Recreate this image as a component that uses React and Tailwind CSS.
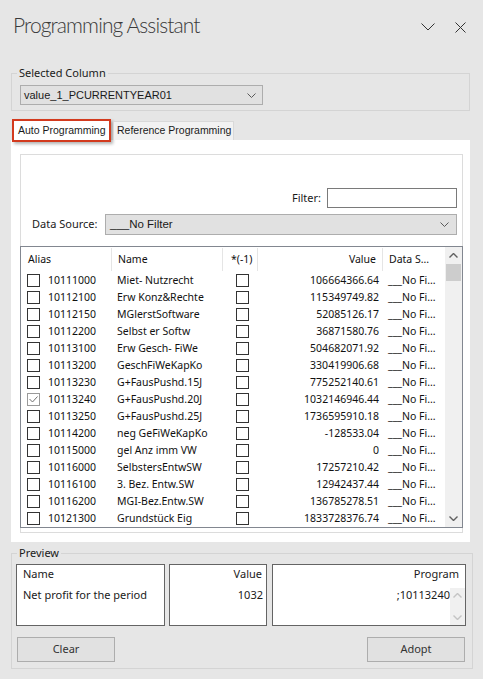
import React from "react";

const rows = [
  ["10111000", "Miet- Nutzrecht", "106664366.64"],
  ["10112100", "Erw Konz&Rechte", "115349749.82"],
  ["10112150", "MGlerstSoftware", "52085126.17"],
  ["10112200", "Selbst er Softw", "36871580.76"],
  ["10113100", "Erw Gesch- FiWe", "504682071.92"],
  ["10113200", "GeschFiWeKapKo", "330419906.68"],
  ["10113230", "G+FausPushd.15J", "775252140.61"],
  ["10113240", "G+FausPushd.20J", "1032146946.44", true],
  ["10113250", "G+FausPushd.25J", "1736595910.18"],
  ["10114200", "neg GeFiWeKapKo", "-128533.04"],
  ["10115000", "gel Anz imm VW", "0"],
  ["10116000", "SelbstersEntwSW", "17257210.42"],
  ["10116100", "3. Bez. Entw.SW", "12942437.44"],
  ["10116200", "MGI-Bez.Entw.SW", "136785278.51"],
  ["10121300", "Grundstück Eig", "1833728376.74"],
];

function Check({ checked }) {
  return (
    <span
      className={
        checked
          ? "w-[13px] h-[13px] border border-[#9a9a9a] bg-white flex items-center justify-center shrink-0"
          : "w-[13px] h-[13px] border border-[#333333] bg-white flex items-center justify-center shrink-0"
      }
    >
      {checked && (
        <svg width="11" height="11" viewBox="0 0 11 11">
          <path d="M1.5 5 L4.5 8 L9.5 2.5" fill="none" stroke="#707070" strokeWidth="1" />
        </svg>
      )}
    </span>
  );
}

function SmallChevron({ color = "#5a5a5a" }) {
  return (
    <svg width="9" height="5" viewBox="0 0 9 5">
      <path d="M0.5 0.5 L4.5 4.5 L8.5 0.5" fill="none" stroke={color} strokeWidth="1" />
    </svg>
  );
}

function Caret({ up, color }) {
  return (
    <svg width="9" height="5" viewBox="0 0 9 5">
      <path
        d={up ? "M0.5 4.5 L4.5 0.5 L8.5 4.5" : "M0.5 0.5 L4.5 4.5 L8.5 0.5"}
        fill="none"
        stroke={color}
        strokeWidth="1.4"
      />
    </svg>
  );
}

export default function App() {
  return (
    <div className="w-[483px] h-[679px] overflow-hidden bg-[#e6e6e6] text-[#1a1a1a] font-['Noto_Sans',sans-serif] text-[11px]">
      {/* title bar */}
      <div className="flex h-[52px] pl-[13px] pr-[17px]">
        <div className="pt-[14px] text-[21px] leading-[22px] font-light tracking-[-0.9px] text-[#3a3a3a] font-['Lato',sans-serif] whitespace-nowrap">
          Programming Assistant
        </div>
        <div className="ml-auto flex items-center gap-[20px] mt-[2px]">
          <svg width="14" height="8" viewBox="0 0 14 8">
            <path d="M0.5 0.5 L7 7 L13.5 0.5" fill="none" stroke="#333" strokeWidth="1" />
          </svg>
          <svg width="11" height="11" viewBox="0 0 11 11">
            <path d="M0.5 0.5 L10.5 10.5 M10.5 0.5 L0.5 10.5" fill="none" stroke="#333" strokeWidth="1" />
          </svg>
        </div>
      </div>

      {/* selected column group */}
      <fieldset className="mt-[13px] ml-[11px] w-[459px] border border-[#d4d4d4] px-[8px] pt-[4px] pb-[5px]">
        <legend className="-ml-[3px] px-[2px] text-[11px] leading-[16px] text-[#1a1a1a]">Selected Column</legend>
        <div className="w-[243px] h-[20px] bg-[#e1e1e1] border border-[#adadad] flex items-center pl-[3px] pr-[6px] font-['Liberation_Sans',sans-serif] text-[11px]">
          <span>value_1_PCURRENTYEAR01</span>
          <span className="ml-auto flex">
            <SmallChevron />
          </span>
        </div>
      </fieldset>

      {/* tab strip */}
      <div className="relative z-10 flex items-start h-[21px] mt-[8px] ml-[12px] font-['Liberation_Sans',sans-serif] text-[10.5px] whitespace-nowrap">
        <div className="w-[99px] h-[23px] border-2 border-[#d33a1e] bg-white pl-[4px] flex items-center shadow-[2px_2px_3px_rgba(0,0,0,0.3)]">
          Auto Programming
        </div>
        <div className="ml-[2px] mt-[2px] w-[121px] h-[19px] border border-b-0 border-[#d9d9d9] bg-[#f2f2f2] pl-[3px] flex items-center">
          Reference Programming
        </div>
      </div>

      {/* tab panel */}
      <div className="ml-[11px] w-[459px] bg-white pt-[14px] pl-[9px] pr-[7px] pb-[9px]">
        <div className="w-[443px] border border-[#dcdcdc] pb-[4px]">
          <div className="mt-[33px] pr-[5px] flex items-center justify-end">
            <span className="mr-[6px]">Filter:</span>
            <div className="w-[130px] h-[20px] border border-[#7a7a7a] bg-white" />
          </div>
          <div className="mt-[6px] pl-[11px] pr-[5px] flex items-center">
            <span className="w-[73px]">Data Source:</span>
            <div className="w-[352px] h-[21px] bg-[#e1e1e1] border border-[#adadad] flex items-center pl-[4px] pr-[7px] font-['Liberation_Sans',sans-serif] text-[11.5px]">
              <span>___No Filter</span>
              <span className="ml-auto flex">
                <SmallChevron />
              </span>
            </div>
          </div>

          {/* list */}
          <div className="mt-[11px] -mx-[1px] border border-[#828790] flex h-[282px] overflow-hidden">
            <div className="w-[424px] text-[10.5px] text-[#111]">
              <div className="grid grid-cols-[91px_111px_35px_125px_62px] h-[25px] items-stretch">
                <div className="flex items-center pl-[7px] border-r border-[#e5e5e5] my-[1px]">Alias</div>
                <div className="flex items-center pl-[6px] border-r border-[#e5e5e5] my-[1px]">Name</div>
                <div className="flex items-center pl-[8px] border-r border-[#e5e5e5] my-[1px]">*(-1)</div>
                <div className="flex items-center justify-end pr-[6px] border-r border-[#e5e5e5] my-[1px]">Value</div>
                <div className="flex items-center pl-[6px] whitespace-nowrap my-[1px]">Data S...</div>
              </div>
              {rows.map(([alias, name, value, checked]) => (
                <div key={alias} className="grid grid-cols-[91px_111px_35px_125px_62px] h-[17px] items-center">
                  <div className="flex items-center pl-[6px]">
                    <Check checked={checked} />
                    <span className="ml-[8px]">{alias}</span>
                  </div>
                  <div className="pl-[5px] whitespace-nowrap">{name}</div>
                  <div className="pl-[13px] flex">
                    <Check />
                  </div>
                  <div className="text-right pr-[4px]">{value}</div>
                  <div className="pl-[5px] whitespace-nowrap">___No Fi...</div>
                </div>
              ))}
            </div>
            {/* vertical scrollbar */}
            <div className="w-[17px] bg-[#f0f0f0] flex flex-col">
              <div className="h-[17px] flex items-center justify-center">
                <Caret up color="#606060" />
              </div>
              <div className="mx-[1px] h-[17px] bg-[#cdcdcd]" />
              <div className="mt-auto h-[17px] flex items-center justify-center">
                <Caret color="#606060" />
              </div>
            </div>
          </div>
        </div>
      </div>

      {/* preview group */}
      <fieldset className="mt-[3px] ml-[11px] w-[462px] border border-[#d4d4d4] pl-[4px] pr-[6px] pt-[3px] pb-[6px]">
        <legend className="ml-[1px] px-[2px] text-[11px] leading-[16px]">Preview</legend>
        <div className="flex h-[62px]">
          <div className="w-[149px] border border-[#646464] bg-white flex flex-col">
            <div className="h-[23px] pt-[2px] pl-[6px] leading-[14px]">Name</div>
            <div className="pl-[6px] leading-[14px]">Net profit for the period</div>
          </div>
          <div className="ml-[4px] w-[98px] border border-[#646464] bg-white flex flex-col text-right">
            <div className="h-[23px] pt-[2px] pr-[4px] leading-[14px]">Value</div>
            <div className="pr-[3px] leading-[14px]">1032</div>
          </div>
          <div className="ml-[5px] w-[194px] border border-[#646464] bg-white flex flex-col">
            <div className="h-[23px] pt-[2px] pr-[6px] leading-[14px] text-right">Program</div>
            <div className="flex flex-1">
              <div className="flex-1 text-right leading-[14px]">;10113240</div>
              <div className="w-[15px] bg-[#f0f0f0] flex flex-col items-center justify-between py-[5px]">
                <Caret up color="#c4c4c4" />
                <Caret color="#c4c4c4" />
              </div>
            </div>
          </div>
        </div>
        <div className="mt-[11px] flex">
          <button className="ml-[1px] w-[98px] h-[25px] bg-[#e1e1e1] border border-[#adadad] text-[#333]">Clear</button>
          <button className="ml-auto mr-[1px] w-[98px] h-[25px] bg-[#e1e1e1] border border-[#adadad] text-[#333]">Adopt</button>
        </div>
      </fieldset>
    </div>
  );
}
